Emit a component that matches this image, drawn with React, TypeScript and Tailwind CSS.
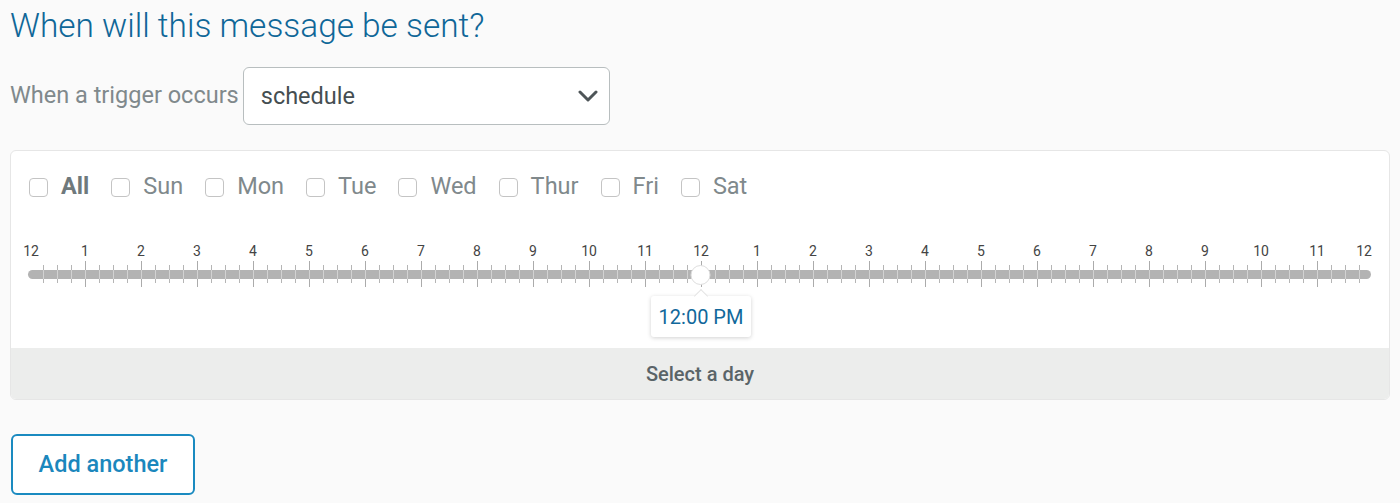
import React from 'react';

const DAYS = ['Sun', 'Mon', 'Tue', 'Wed', 'Thur', 'Fri', 'Sat'];
const LABELS = [12, 1, 2, 3, 4, 5, 6, 7, 8, 9, 10, 11, 12, 1, 2, 3, 4, 5, 6, 7, 8, 9, 10, 11, 12];

// hour -> x inside the ruler svg
const hx = (h: number) => 18 + h * 56;

const Checkbox: React.FC = () => (
  <span className="inline-block w-[19px] h-[19px] rounded-[4px] border border-[#c4c4c4] bg-white" />
);

const Ruler: React.FC = () => {
  const majors = [];
  const minors = [];
  for (let h = 1; h < 24; h++) majors.push(hx(h));
  for (let q = 1; q < 96; q++) {
    if (q % 4 !== 0) minors.push(18 + q * 14);
  }

  return (
    <div className="relative h-[141px]">
      <svg width="1377" height="141" viewBox="0 0 1377 141" className="block">
        {LABELS.map((l, i) => {
          let x = hx(i);
          if (i === 0) x = 20;
          if (i === 24) x = 1353;
          return (
            <text
              key={i}
              x={x}
              y={49}
              textAnchor="middle"
              fontSize="14"
              fill="#444"
              fontFamily="Roboto, sans-serif"
            >
              {l}
            </text>
          );
        })}
        {majors.map((x) => (
          <line key={'M' + x} x1={x + 0.5} x2={x + 0.5} y1={54} y2={80} stroke="#ababab" strokeWidth="1" />
        ))}
        {minors.map((x) => (
          <line key={'m' + x} x1={x + 0.5} x2={x + 0.5} y1={58} y2={76} stroke="#b5b5b5" strokeWidth="1" />
        ))}
        <rect x={17} y={63} width={1343} height={9} rx={4.5} fill="#b3b3b3" />
        {majors.map((x) => (
          <line key={'Mt' + x} x1={x + 0.5} x2={x + 0.5} y1={63} y2={72} stroke="#d2d2d2" strokeWidth="1" />
        ))}
        {minors.map((x) => (
          <line key={'mt' + x} x1={x + 0.5} x2={x + 0.5} y1={63} y2={72} stroke="#d2d2d2" strokeWidth="1" />
        ))}
        <circle cx={689.5} cy={68} r={9.5} fill="#fff" stroke="#dedede" strokeWidth="1" />
      </svg>

      <div className="absolute left-[640px] top-[89px] w-[100px] h-[41px] bg-white rounded-[3px] shadow-[0_1px_4px_rgba(0,0,0,0.18)] flex items-center justify-center">
        <span className="absolute -top-[5px] left-[45px] w-[10px] h-[10px] bg-white rotate-45 border-l border-t border-[#e4e4e4]" />
        <span className="relative text-[20px] text-[#11689b]">12:00 PM</span>
      </div>
    </div>
  );
};

export default function App() {
  return (
    <div className="min-h-screen bg-[#fafafa] px-[10px] font-['Roboto',sans-serif]">
      <h1 className="pt-[7px] text-[33.4px] leading-[38px] font-light text-[#0f6798]">
        When will this message be sent?
      </h1>

      <div className="mt-[22px] flex items-center gap-[4px]">
        <span className="text-[23.5px] text-[#80898c]">When a trigger occurs</span>
        <div className="w-[367px] h-[58px] bg-white border border-[#b8bebf] rounded-[6px] flex items-center justify-between pl-[17px] pr-[11px]">
          <span className="text-[23.5px] text-[#454e51] translate-y-[1px]">schedule</span>
          <svg width="20" height="12" viewBox="0 0 20 12" fill="none">
            <path d="M2 2 L10 10 L18 2" stroke="#4e5558" strokeWidth="3" strokeLinecap="round" strokeLinejoin="round" />
          </svg>
        </div>
      </div>

      <div className="mt-[25px] bg-white border border-[#e6e6e6] rounded-[6px] overflow-hidden">
        <div className="pt-[16px] pl-[18px] h-[56px] flex items-center gap-[22px]">
          <label className="flex items-center gap-[13px]">
            <Checkbox />
            <span className="text-[23.5px] font-bold text-[#6f797c]">All</span>
          </label>
          {DAYS.map((d) => (
            <label key={d} className="flex items-center gap-[13px]">
              <Checkbox />
              <span className="text-[23.5px] text-[#80898c]">{d}</span>
            </label>
          ))}
        </div>

        <Ruler />

        <div className="h-[51px] bg-[#ecedec] flex items-center justify-center">
          <span className="text-[20px] font-medium text-[#5a6468]">Select a day</span>
        </div>
      </div>

      <button className="mt-[34px] ml-px w-[184px] h-[61px] bg-white border-2 border-[#1a8ac0] rounded-[6px] text-[23.5px] font-medium text-[#1b87bd]">
        Add another
      </button>
    </div>
  );
}
